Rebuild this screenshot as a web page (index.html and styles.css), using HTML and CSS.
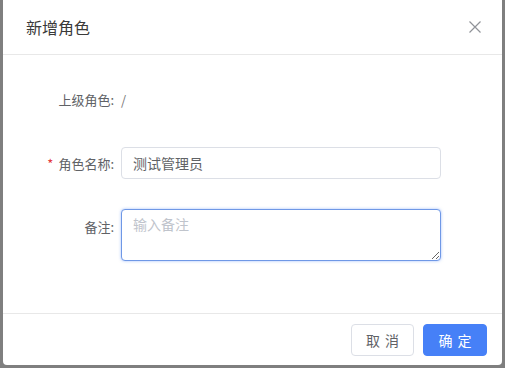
FILE: index.html
```html
<!DOCTYPE html>
<html>
<head>
	<meta charset="utf-8">
	<title>新增角色</title>
	<link rel="stylesheet" href="styles.css">
</head>
<body>
	<div class="dialog">
		<div class="dialog-header">
			<span class="dialog-title">新增角色</span>
			<a href="javascript:;" class="dialog-close">
				<svg width="12" height="12" viewBox="0 0 12 12"><path d="M0.5 0.5L11.5 11.5M11.5 0.5L0.5 11.5" stroke="#909399" stroke-width="1.2" fill="none"/></svg>
			</a>
		</div>
		<div class="dialog-body">
			<div class="form-item">
				<label class="form-label">上级角色:</label>
				<div class="form-content">/</div>
			</div>
			<div class="form-item item-name">
				<label class="form-label required">角色名称:</label>
				<div class="form-content">
					<input class="input" type="text" value="测试管理员">
				</div>
			</div>
			<div class="form-item item-remark">
				<label class="form-label">备注:</label>
				<div class="form-content">
					<textarea class="textarea focus" placeholder="输入备注"></textarea>
				</div>
			</div>
		</div>
		<div class="dialog-footer">
			<a href="javascript:;" class="btn">取 消</a>
			<a href="javascript:;" class="btn btn-primary">确 定</a>
		</div>
	</div>
</body>
</html>
```
FILE: styles.css
```css
* { margin: 0; padding: 0; box-sizing: border-box; text-decoration: none; }
body {
	background: #7f7f7f;
	font-family: "Noto Sans CJK SC", "Liberation Sans", sans-serif;
	height: 368px;
	overflow: hidden;
}
.dialog {
	width: 499px;
	height: 365px;
	margin-left: 3px;
	background: #fff;
	border-radius: 0 0 4px 4px;
}
.dialog-header {
	height: 55px;
	border-bottom: 1px solid #e8e8e8;
	display: flex;
	align-items: center;
	justify-content: space-between;
	padding: 0 21px 1px 23px;
}
.dialog-title { font-size: 16px; color: #3a3a3a; }
.dialog-close { display: flex; width: 12px; height: 12px; }

.dialog-body { height: 258px; padding-top: 28px; }
.form-item {
	display: flex;
	align-items: center;
	height: 32px;
}
.item-name { margin-top: 32px; }
.item-remark { margin-top: 30px; height: 52px; align-items: flex-start; }
.item-remark .form-label { line-height: 36px; }
.form-label {
	width: 111px;
	text-align: right;
	font-size: 13px;
	color: #606266;
	margin-right: 7px;
}
.form-label.required:before { content: "*"; color: #e4393c; margin-right: 5px; }
.form-content { font-size: 13px; color: #777; width: 320px; }
.input {
	width: 320px;
	height: 32px;
	border: 1px solid #dcdfe6;
	border-radius: 4px;
	padding: 0 11px;
	font-family: inherit;
	font-size: 14px;
	color: #606266;
	outline: none;
}
.textarea {
	display: block;
	width: 320px;
	height: 52px;
	border: 1px solid #dcdfe6;
	border-radius: 4px;
	padding: 4px 11px;
	font-family: inherit;
	font-size: 14px;
	color: #606266;
	outline: none;
	resize: vertical;
}
.textarea::placeholder { color: #c0c4cc; }
.textarea.focus { border-color: #6f98e6; box-shadow: 0 0 3px rgba(70, 128, 247, .5); }

.dialog-footer {
	border-top: 1px solid #e8e8e8;
	display: flex;
	justify-content: flex-end;
	gap: 9px;
	padding: 10px 15px 0 0;
}
.btn {
	display: block;
	width: 63px;
	height: 32px;
	line-height: 30px;
	text-align: center;
	border: 1px solid #dcdfe6;
	border-radius: 4px;
	font-size: 14px;
	letter-spacing: 1px;
	text-indent: 1px;
	color: #606266;
	background: #fff;
}
.btn-primary { width: 64px; background: #4680f7; border-color: #4680f7; color: #fff; }
```
